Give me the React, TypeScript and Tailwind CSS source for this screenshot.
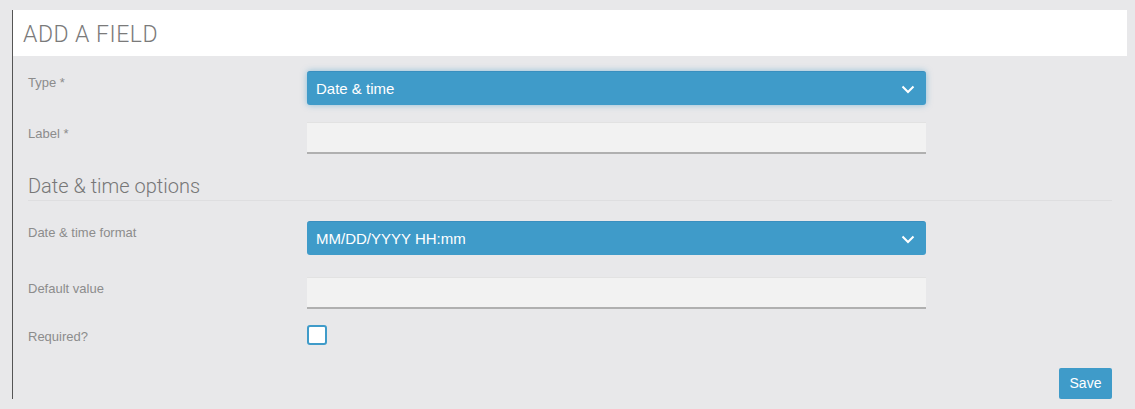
import React from "react";

function Chevron() {
  return (
    <svg width="14" height="9" viewBox="0 0 14 9" className="shrink-0">
      <polyline points="1.5,1.5 7,7 12.5,1.5" fill="none" stroke="#ffffff" strokeWidth="2" />
    </svg>
  );
}

function Row({ label, children, className = "" }: { label: string; children: React.ReactNode; className?: string }) {
  return (
    <div className={`flex items-start ${className}`}>
      <div className="w-[279px] shrink-0 pt-[3px] text-[13px] leading-[18px] text-[#8c8c8c]">{label}</div>
      {children}
    </div>
  );
}

function Select({ value, focused }: { value: string; focused?: boolean }) {
  return (
    <div
      className={`flex h-[34px] w-[619px] items-center justify-between rounded-[3px] border-t border-[#3a8fbf] bg-[#3f9bc9] pl-[9px] pr-[11px] pt-[1px] text-[15px] text-white ${
        focused ? "shadow-[0_0_6px_rgba(63,155,201,0.55)]" : ""
      }`}
    >
      <span>{value}</span>
      <Chevron />
    </div>
  );
}

function TextInput() {
  return <div className="h-[32px] w-[619px] border-t border-b-2 border-t-[#e2e2e2] border-b-[#b0b0b0] bg-[#f2f2f2]" />;
}

export default function App() {
  return (
    <div className="h-[409px] w-[1135px] bg-[#e8e8ea] pt-[10px] font-['Liberation_Sans',sans-serif]">
      <div className="ml-[12px] mr-[8px] border-l border-[#555555]">
        <div className="flex h-[46px] items-center bg-white pl-[10px] pt-[5px] font-['Roboto',sans-serif] text-[23px] font-light tracking-[0.5px] text-[#7a7a7a]">
          ADD A FIELD
        </div>
        <div className="pl-[15px] pr-[15px]">
          <Row label="Type *" className="mt-[15px]">
            <Select value="Date & time" focused />
          </Row>
          <Row label="Label *" className="mt-[17px]">
            <TextInput />
          </Row>
          <div className="mt-[18px] border-b border-[#dedee0] font-['Roboto',sans-serif] text-[20px] font-light leading-[28px] text-[#777777]">
            Date &amp; time options
          </div>
          <Row label="Date & time format" className="mt-[20px]">
            <Select value="MM/DD/YYYY HH:mm" />
          </Row>
          <Row label="Default value" className="mt-[22px]">
            <TextInput />
          </Row>
          <Row label="Required?" className="mt-[16px]">
            <div className="h-[20px] w-[20px] rounded-[3px] border-2 border-[#3f9bc9] bg-white" />
          </Row>
          <div className="mt-[22px] flex justify-end">
            <button className="h-[31px] w-[53px] rounded-[2px] bg-[#3f9bc9] text-[14px] text-white">Save</button>
          </div>
        </div>
      </div>
    </div>
  );
}
